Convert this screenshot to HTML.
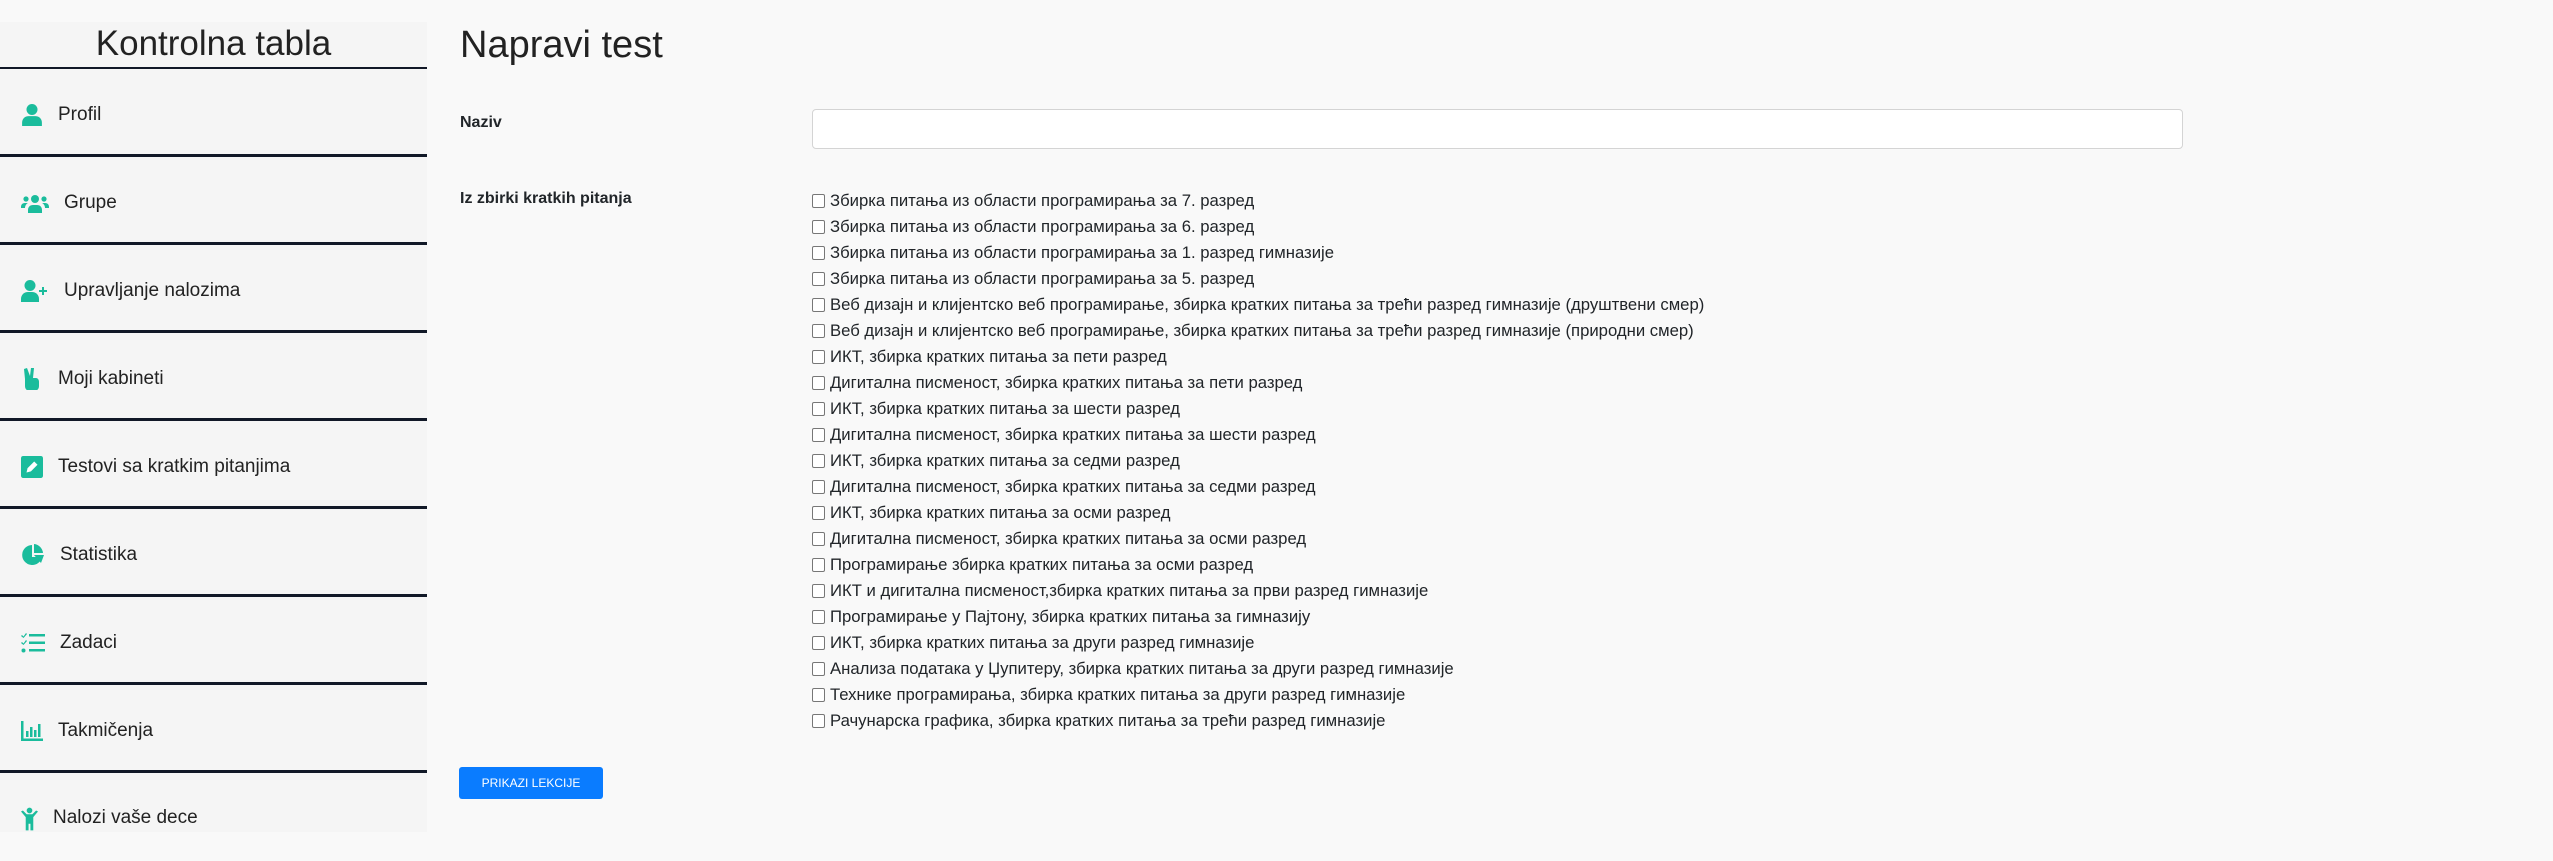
<!DOCTYPE html>
<html><head><meta charset="utf-8"><style>
*{margin:0;padding:0;box-sizing:border-box}
body{width:2553px;height:832px;background:#f9f9f9;font-family:"Liberation Sans",sans-serif;color:#212529;position:relative;overflow:hidden}
.side{position:absolute;left:0;top:22px;width:427px;height:810px;background:#f5f5f5}
.side h1{font-weight:400;font-size:35px;text-align:center;height:47px;line-height:44px;border-bottom:2px solid #111827;color:#222}
.item{height:88px;border-bottom:3px solid #111827;display:flex;align-items:center;padding-left:21px;padding-top:6px;font-size:19px;color:#222}
.item svg{width:22px;height:22px;margin-right:15px;fill:#1abc9c}
h2{position:absolute;left:460px;top:24px;font-weight:400;font-size:38px;color:#222}
.lbl{position:absolute;left:460px;font-weight:700;font-size:16px}
.inp{position:absolute;left:812px;top:109px;width:1371px;height:40px;background:#fff;border:1px solid #d4d4d4;border-radius:4px}
.list{position:absolute;left:812px;top:188px;font-size:16.7px}
.list div{height:26px;line-height:26px;display:flex;align-items:center}
.list span{display:inline-block;width:13px;height:14px;border:1.5px solid #777;border-radius:2px;margin-right:5px;background:#fff}
.btn{position:absolute;left:459px;top:767px;width:144px;height:32px;background:#0a7cff;border-radius:3px;color:#fff;font-size:12px;text-align:center;line-height:32px}
</style></head><body>
<div class="side">
<h1>Kontrolna tabla</h1>
<div class="item"><svg viewBox="0 0 20 20"><circle cx="10" cy="5" r="5"/><path d="M1 20v-3c0-4 3-6 6-6h6c3 0 6 2 6 6v3z"/></svg>Profil</div>
<div class="item"><svg viewBox="0 0 28 20" style="width:28px"><circle cx="14" cy="6" r="4"/><circle cx="5" cy="6" r="2.6"/><circle cx="23" cy="6" r="2.6"/><path d="M7 20v-3c0-3 2-5 5-5h4c3 0 5 2 5 5v3zM0 14c0-2 1-4 4-4h3c-2 1-3 3-3 5H0zM28 14c0-2-1-4-4-4h-3c2 1 3 3 3 5h4z"/></svg>Grupe</div>
<div class="item"><svg viewBox="0 0 28 22" style="width:28px"><circle cx="9" cy="5.5" r="5.5"/><path d="M0 22v-3c0-4 3-7 7-7h4c4 0 7 3 7 7v3z"/><path d="M21 7h2v3h3v2h-3v3h-2v-3h-3v-2h3z"/></svg>Upravljanje nalozima</div>
<div class="item"><svg viewBox="0 0 20 22"><path d="M2 1l3-1 3 8 1-8h3l-1 10h3c2 0 3 2 3 4v4c0 3-2 5-5 5H8c-3 0-5-2-5-5v-7z"/></svg>Moji kabineti</div>
<div class="item"><svg viewBox="0 0 20 20"><rect width="20" height="20" rx="2"/><path d="M5 15l1-4 6-6 3 3-6 6z" fill="#fff"/></svg>Testovi sa kratkim pitanjima</div>
<div class="item"><svg viewBox="0 0 24 22" style="width:24px"><path d="M11 1a10 10 0 1 0 10 12H11z"/><path d="M13 0a10 10 0 0 1 9 9h-9zM13 11h10l-3 8z"/></svg>Statistika</div>
<div class="item"><svg viewBox="0 0 24 20" style="width:24px"><path d="M1 2l1.5 1.5L5 0l1 1-3.5 4L0 3zM1 9l1.5 1.5L5 7l1 1-3.5 4L0 10z"/><circle cx="2.5" cy="17.5" r="2"/><rect x="8" y="1" width="16" height="2.5"/><rect x="8" y="8.5" width="16" height="2.5"/><rect x="8" y="16" width="16" height="2.5"/></svg>Zadaci</div>
<div class="item"><svg viewBox="0 0 22 20"><path d="M0 0h2.5v17.5H22V20H0z"/><rect x="5" y="10" width="2.5" height="6"/><rect x="9" y="6" width="2.5" height="10"/><rect x="13" y="9" width="2.5" height="7"/><rect x="17" y="3" width="2.5" height="13"/></svg>Takmičenja</div>
<div class="item" style="border:0;align-items:flex-start;padding-top:34px"><svg viewBox="0 0 18 24" style="width:17px;height:24px"><circle cx="9" cy="3" r="3"/><path d="M0 4l2-1 4 4h6l4-4 2 1-5 6v14h-3v-7H8v7H5V10z"/></svg>Nalozi vaše dece</div>
</div>
<h2>Napravi test</h2>
<div class="lbl" style="top:114px">Naziv</div>
<div class="inp"></div>
<div class="lbl" style="top:190px">Iz zbirki kratkih pitanja</div>
<div class="list">
<div><span></span>Збирка питања из области програмирања за 7. разред</div>
<div><span></span>Збирка питања из области програмирања за 6. разред</div>
<div><span></span>Збирка питања из области програмирања за 1. разред гимназије</div>
<div><span></span>Збирка питања из области програмирања за 5. разред</div>
<div><span></span>Веб дизајн и клијентско веб програмирање, збирка кратких питања за трећи разред гимназије (друштвени смер)</div>
<div><span></span>Веб дизајн и клијентско веб програмирање, збирка кратких питања за трећи разред гимназије (природни смер)</div>
<div><span></span>ИКТ, збирка кратких питања за пети разред</div>
<div><span></span>Дигитална писменост, збирка кратких питања за пети разред</div>
<div><span></span>ИКТ, збирка кратких питања за шести разред</div>
<div><span></span>Дигитална писменост, збирка кратких питања за шести разред</div>
<div><span></span>ИКТ, збирка кратких питања за седми разред</div>
<div><span></span>Дигитална писменост, збирка кратких питања за седми разред</div>
<div><span></span>ИКТ, збирка кратких питања за осми разред</div>
<div><span></span>Дигитална писменост, збирка кратких питања за осми разред</div>
<div><span></span>Програмирање збирка кратких питања за осми разред</div>
<div><span></span>ИКТ и дигитална писменост,збирка кратких питања за први разред гимназије</div>
<div><span></span>Програмирање у Пајтону, збирка кратких питања за гимназију</div>
<div><span></span>ИКТ, збирка кратких питања за други разред гимназије</div>
<div><span></span>Анализа података у Џупитеру, збирка кратких питања за други разред гимназије</div>
<div><span></span>Технике програмирања, збирка кратких питања за други разред гимназије</div>
<div><span></span>Рачунарска графика, збирка кратких питања за трећи разред гимназије</div>
</div>
<div class="btn">PRIKAZI LEKCIJE</div>
</body></html>
